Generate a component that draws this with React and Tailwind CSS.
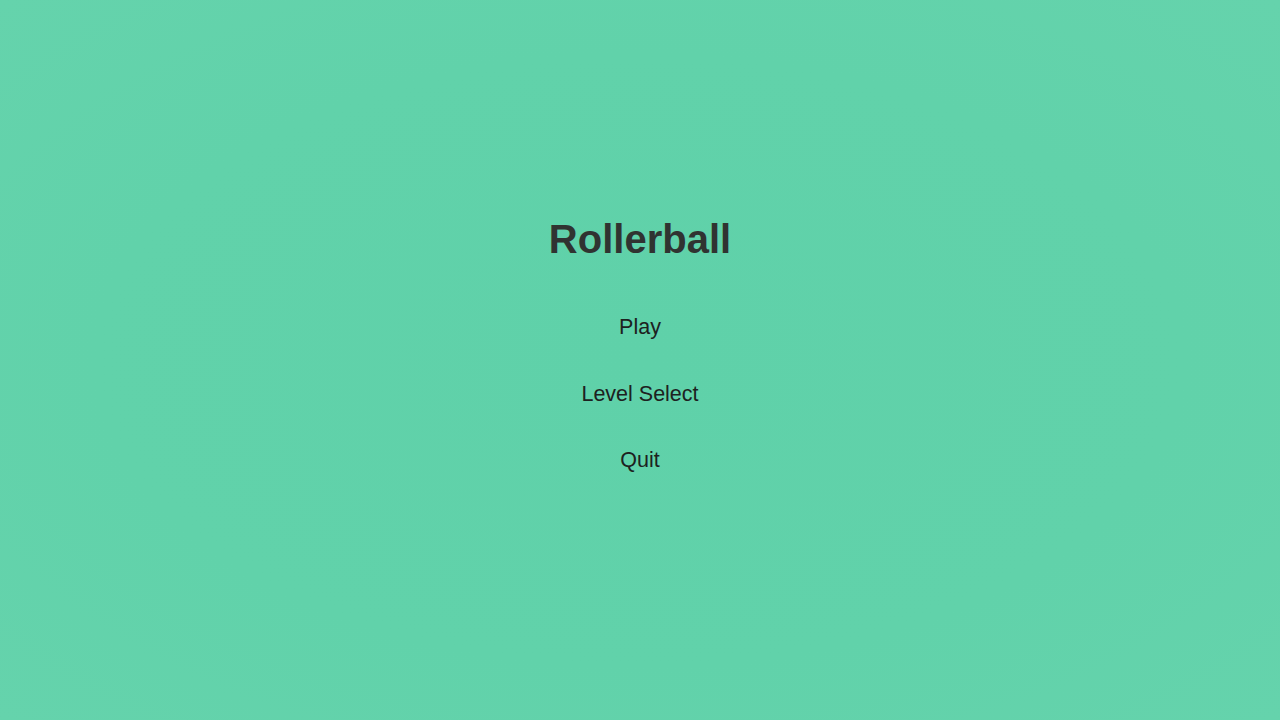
export default function App() {
  return (
    <div
      className="w-[1280px] h-[720px] overflow-hidden flex flex-col items-center bg-[radial-gradient(ellipse_at_center,#5fd1a9_0%,#61d2aa_60%,#65d3ac_100%)]"
      style={{ fontFamily: '"Liberation Sans", Arial, sans-serif' }}
    >
      <h1 className="mt-[215px] h-[48px] leading-[48px] text-[40px] font-bold text-[#303331]">
        Rollerball
      </h1>
      <nav className="mt-[31px] flex flex-col items-center">
        {["Play", "Level Select", "Quit"].map((t) => (
          <button
            key={t}
            className="h-[66.5px] leading-[66.5px] text-[21.5px] text-[#1d2120] bg-transparent"
          >
            {t}
          </button>
        ))}
      </nav>
    </div>
  );
}
